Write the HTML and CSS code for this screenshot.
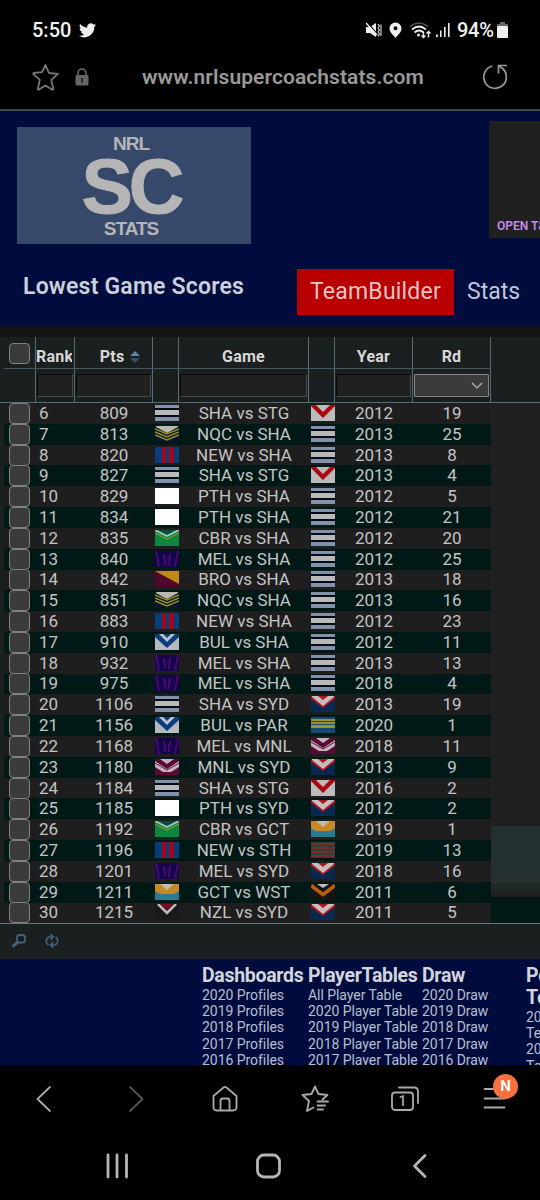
FILE: index.html
```html
<!DOCTYPE html>
<html lang="en">
<head>
    <meta charset="UTF-8">
    <meta name="viewport" content="width=device-width, initial-scale=1.0">
    <title>Lowest Game Scores</title>
    <link rel="stylesheet" href="styles.css">
</head>
<body>
    <div class="status-bar">
        <span class="clock">5:50</span>
        <svg class="bird" width="17" height="15" viewBox="0 0 24 20" fill="#eee"><path d="M24 2.4a10 10 0 0 1-2.8.8A5 5 0 0 0 23.300.4a10 10 0 0 1-3.100 1.200A4.900 4.900 0 0 0 11.700 6 14 14 0 0 1 1.700.9a4.900 4.900 0 0 0 1.500 6.600A5 5 0 0 1 1 6.900a4.900 4.900 0 0 0 3.900 4.900 5 5 0 0 1-2.200.1 4.900 4.900 0 0 0 4.600 3.400A10 10 0 0 1 0 17.400 14 14 0 0 0 21.500 5a10 10 0 0 0 2.500-2.600z"/></svg>
        <div class="status-icons">
            <svg width="16" height="16" viewBox="0 0 16 16" fill="none"><path d="M0 5h4l6-4v14l-6-4H0z" fill="#eee"/><path d="M1 0l10 12" stroke="#000" stroke-width="1.500"/><path d="M0 1l11 12" stroke="#eee" stroke-width="1.500"/><path d="M12 2l1.500 2L12 6l1.500 2L12 10l1.500 2-1.500 2.500M15 2.500V14" stroke="#ddd" stroke-width="1.100"/></svg>
            <svg width="13" height="16" viewBox="0 0 13 16"><path fill="#eee" fill-rule="evenodd" d="M6.500.5a6 6 0 0 1 6 6c0 3.500-3.500 6.500-6 9.500-2.500-3-6-6-6-9.500a6 6 0 0 1 6-6zm0 3.700a2 2 0 1 0 0 4 2 2 0 0 0 0-4z"/></svg>
            <svg width="22" height="17" viewBox="0 0 22 17" fill="none" stroke="#eee" stroke-width="1.700"><path stroke="#555" d="M1 4.500q9-7 18 0"/><path d="M3 7.500q7-6 14 0M5.500 10.500q4.500-4 9 0"/><circle cx="9.500" cy="13" r="1.500" fill="#eee" stroke="none"/><path stroke-width="1.400" d="M14.500 9.500v6m-2-2l2 2 2-2M19.500 15.500v-6m-2 2l2-2 2 2"/></svg>
            <svg width="14" height="16" viewBox="0 0 14 16" fill="#eee"><path d="M0 12.500h1.800V15H0zM4 8.500h1.500V15H4zM8 5h1.600v10H8zM12 1h1.600v14H12z"/></svg>
            <span class="percent">94%</span>
            <svg width="11" height="16" viewBox="0 0 11 16"><path fill="#666" d="M3 0h5v2h3v2H0V2h3z"/><rect y="4" width="11" height="12" rx="1" fill="#eee"/></svg>
        </div>
    </div>

    <div class="url-bar">
        <svg class="fav" width="28" height="28" viewBox="0 0 28 28" fill="none" stroke="#777" stroke-width="1.800" stroke-linejoin="round"><path d="M14.500 2l3.500 8 9 .9-6.700 6 2 9.100q-.2 1-1.300.6L14.500 22.500 8 26.600q-1 .3-1.200-.6l2-9.100-6.600-6q0-.8.8-.9l8-.9z"/></svg>
        <svg class="lock" width="14" height="18" viewBox="0 0 14 18"><path fill="none" stroke="#666" stroke-width="1.600" d="M3 8V5a4 4 0 0 1 8 0v3"/><rect x=".5" y="7" width="13" height="10.500" rx="1.500" fill="#666"/><path stroke="#111" stroke-width="1.500" d="M7 10v4.500"/></svg>
        <span class="address">www.nrlsupercoachstats.com</span>
        <svg class="reload" width="26" height="26" viewBox="0 0 26 26" fill="none" stroke="#999" stroke-width="1.700"><path d="M10.500 2A11.300 11.300 0 1 0 20.500 4.500M25 1.500h-8.500V9.500M17 2l4.500 3"/></svg>
    </div>

    <header class="site-header">
        <div class="banner">
            <div class="logo">
                <span class="logo-small">NRL</span>
                <span class="logo-big">SC</span>
                <span class="logo-small">STATS</span>
            </div>
            <div class="ad">OPEN T&amp;C</div>
        </div>
        <div class="menu">
            <h1>Lowest Game Scores</h1>
            <a class="team-builder">TeamBuilder</a>
            <a class="stats">Stats</a>
        </div>
    </header>

    <main class="grid-box">
        <div class="grid-row grid-head">
            <div class="cell check"><i></i></div>
            <div class="cell rank"><span>Rank</span></div>
            <div class="cell sorted">Pts <svg width="12" height="14" viewBox="0 0 12 14"><path d="M6 1l5 5H1z" fill="#5b88a8"/><path d="M6 13L1 8h10z" fill="#34505f"/></svg></div>
            <div class="cell"></div>
            <div class="cell">Game</div>
            <div class="cell"></div>
            <div class="cell">Year</div>
            <div class="cell">Rd</div>
        </div>
        <div class="grid-row grid-filter">
            <div class="cell"></div>
            <div class="cell"><span class="field"></span></div>
            <div class="cell"><span class="field"></span></div>
            <div class="cell"></div>
            <div class="cell"><span class="field"></span></div>
            <div class="cell"></div>
            <div class="cell"><span class="field"></span></div>
            <div class="cell"><span class="field select"><svg width="12" height="8" viewBox="0 0 12 8" fill="none" stroke="#bbb" stroke-width="1.200"><path d="M1 1l5 5 5-5"/></svg></span></div>
        </div>
        <div class="grid-body">
            <div id="rows"></div>
            <div class="side">
                <div class="side-panel"></div>
                <div class="side-row"></div>
            </div>
        </div>
        <div class="pager">
            <svg width="14" height="14" viewBox="0 0 14 14" fill="none" stroke="#42637d"><rect x="5" y="1" width="8" height="7.500" rx="2.500" stroke-width="1.800"/><path d="M6 8l-5.500 4.500" stroke-width="3"/></svg>
            <svg width="14" height="16" viewBox="0 0 14 16" fill="none" stroke="#42637d" stroke-width="1.600"><path d="M3.500 12A4.500 4.500 0 0 1 4 4h4M5.500 1l3 3-3 3M10.500 4a4.500 4.500 0 0 1-.5 8H6M8.500 9l-3 3 3 3"/></svg>
        </div>
    </main>

    <footer class="site-footer">
        <div class="links dashboards">
            <h2>Dashboards</h2>
            <a>2020 Profiles</a><a>2019 Profiles</a><a>2018 Profiles</a><a>2017 Profiles</a><a>2016 Profiles</a>
        </div>
        <div class="links tables">
            <h2>PlayerTables</h2>
            <a>All Player Table</a><a>2020 Player Table</a><a>2019 Player Table</a><a>2018 Player Table</a><a>2017 Player Table</a>
        </div>
        <div class="links draw">
            <h2>Draw</h2>
            <a>2020 Draw</a><a>2019 Draw</a><a>2018 Draw</a><a>2017 Draw</a><a>2016 Draw</a>
        </div>
        <div class="links teams">
            <h2>Po<br>Te</h2>
            <a>20</a><a>Te</a><a>20</a><a>Te</a>
        </div>
    </footer>

    <nav class="browser-nav">
        <svg width="30" height="30" viewBox="0 0 30 30"><path d="M20 3L7.500 15 20 27"/></svg>
        <svg class="dim" width="30" height="30" viewBox="0 0 30 30"><path d="M10 3l12.500 12L10 27"/></svg>
        <svg width="30" height="30" viewBox="0 0 30 30"><path d="M3.500 12L13.500 3.500q1.500-1 3 0L26.500 12v11q0 3.500-3.500 3.500H7q-3.500 0-3.500-3.500zM10.500 26V17q0-2.500 2.500-2.500h4q2.500 0 2.500 2.500v9"/></svg>
        <svg width="30" height="30" viewBox="0 0 30 30"><path d="M22.500 15.500l5-4.500-9-1L15 2.500 11.500 10l-9 1 6.500 6-2 10 6.500-3.500M17.500 17.500H28M17.500 21.500h7.500M17.500 25.500H23"/></svg>
        <svg width="30" height="30" viewBox="0 0 30 30"><rect x="2" y="8.500" width="21" height="17.500" rx="3"/><path d="M9 3.500h15q4 0 4 4V19"/><text x="12.500" y="22" text-anchor="middle">1</text></svg>
        <div class="menu-icon">
            <svg width="30" height="30" viewBox="0 0 30 30"><path d="M4.500 5h20M4.500 14.500h20M4.500 23.500h20"/></svg>
            <b>N</b>
        </div>
    </nav>

    <div class="system-nav">
        <svg width="28" height="28" viewBox="0 0 28 28"><path d="M5 3v22M14 3v22M23.500 3v22"/></svg>
        <svg width="28" height="28" viewBox="0 0 28 28"><rect x="2.500" y="3" width="22" height="22" rx="6.500"/></svg>
        <svg width="28" height="28" viewBox="0 0 28 28"><path d="M19 3.500L8.500 14 19 24.500"/></svg>
    </div>

    <script src="script.js"></script>
</body>
</html>
```
FILE: styles.css
```css
* {
    box-sizing: border-box;
}
body {
    margin: 0;
    width: 540px;
    height: 1200px;
    overflow: hidden;
    background: #000;
    color: #c8c8c8;
    font-family: Roboto, "Liberation Sans", sans-serif;
}
svg {
    flex: none;
}
h1, h2 {
    margin: 0;
}

/* phone status bar and address bar */
.status-bar {
    display: flex;
    align-items: center;
    height: 60px;
    padding: 0 32px 0 32px;
    color: #f2f2f2;
    font-weight: 500;
}
.clock {
    font-size: 20px;
    width: 40px;
}
.bird {
    margin-left: 7px;
}
.status-icons {
    display: flex;
    align-items: center;
    margin-left: auto;
}
.status-icons svg:nth-child(2) {
    margin: 0 7px 0 7px;
}
.status-icons svg:nth-child(4) {
    margin-left: 5px;
}
.percent {
    font-size: 20px;
    width: 38px;
    margin: 0 2px 0 7px;
    letter-spacing: -0.3px;
}
.url-bar {
    display: flex;
    align-items: center;
    height: 51px;
    padding: 0 32px 16px 31px;
    border-bottom: 2px solid #3f4a4a;
}
.lock {
    margin-left: 16px;
}
.address {
    margin-left: 53px;
    padding-top: 1px;
    color: #999;
    font-size: 21px;
    font-weight: 600;
    letter-spacing: 0.08px;
    white-space: nowrap;
}
.reload {
    margin-left: auto;
}

.site-header {
    height: 215px;
    background: #000c3d;
}
.banner {
    display: flex;
    justify-content: space-between;
    height: 134px;
    padding: 10px 0 0 17px;
}
.logo {
    display: flex;
    flex-direction: column;
    align-items: center;
    width: 234px;
    height: 117px;
    margin-top: 6px;
    padding: 6px 6px 0 0;
    background: #36496b;
    color: #b5b5b5;
    font-family: "Liberation Sans", sans-serif;
    font-weight: bold;
}
.logo-small {
    font-size: 19px;
    line-height: 22px;
    letter-spacing: -1px;
}
.logo-big {
    font-size: 77px;
    line-height: 63px;
    letter-spacing: -4px;
    -webkit-text-stroke: 1px #b5b5b5;
}
.ad {
    display: flex;
    align-items: flex-end;
    width: 51px;
    height: 117px;
    padding: 0 0 5px 8px;
    overflow: hidden;
    background: #202020;
    color: #c58de8;
    font-size: 12px;
    font-weight: 600;
    white-space: nowrap;
}
.menu {
    display: flex;
    align-items: flex-start;
    padding: 24px 0 0 23px;
}
h1 {
    width: 274px;
    padding-top: 4px;
    color: #ccd0da;
    font-size: 23px;
    font-weight: 600;
    line-height: 27px;
    letter-spacing: 0.2px;
}
.menu a {
    font-size: 23px;
    line-height: 46px;
}
.menu .team-builder {
    width: 157px;
    background: #b90000;
    color: #e4c4c4;
    letter-spacing: 0.2px;
    text-align: center;
}
.stats {
    margin-left: 13px;
    color: #bfc8dc;
}

/* scores grid */
.grid-box {
    height: 633px;
    padding-top: 10px;
    border-top: 1px solid #121212;
    background: linear-gradient(#151515 10px, #1a1f1f 10px);
}
.grid-row {
    display: grid;
    grid-template-columns: 32px 39px 78px 26px 130px 26px 78px 78px;
    width: 487px;
    margin-left: 4px;
}
.cell {
    display: flex;
    align-items: center;
    justify-content: center;
    overflow: hidden;
}
.grid-head {
    height: 32px;
    border-bottom: 1px solid #47565c;
    color: #d8d8d8;
    font-size: 16px;
    font-weight: 700;
    letter-spacing: 0.2px;
}
.grid-head .cell,
.grid-filter .cell {
    border-right: 1px solid #5b6b73;
}
.grid-head .cell {
    padding-top: 8px;
}
.grid-head .check {
    padding-top: 2px;
}
.grid-head .rank {
    justify-content: flex-start;
}
.grid-head .rank span {
    width: 36px;
    overflow: hidden;
}
.grid-head .sorted {
    padding-left: 14px;
}
.grid-head svg {
    margin-left: 5px;
}
.grid-filter {
    height: 33px;
}
.field {
    flex: 1;
    height: 23px;
    margin: 0 1px;
    border: 1px solid #414c50;
    border-top-color: #080808;
    border-left-color: #080808;
    background: #202020;
}
.select {
    display: flex;
    align-items: center;
    justify-content: flex-end;
    padding-right: 5px;
    border: 1px solid #858585;
    border-radius: 1px;
    background: #3b3b3b;
}
.check i {
    flex: none;
    width: 21px;
    height: 21px;
    margin-right: 1px;
    border: 1.5px solid #808080;
    border-radius: 4px;
    background: #3b3b3b;
}
.grid-body {
    display: flex;
    height: 522px;
    border-top: 1px solid #5b6b73;
    border-bottom: 1px solid #68777e;
}
#rows .grid-row {
    height: 20.82px;
    background: #1e1e1e;
    color: #c4c4c4;
    font-size: 17px;
    line-height: 20px;
}
#rows .grid-row:nth-child(even) {
    background: #001917;
}
#rows .cell {
    padding-bottom: 1px;
}
#rows .check {
    padding-bottom: 0;
}
#rows .rank {
    justify-content: flex-start;
    padding-left: 3px;
}
#rows .team {
    justify-content: flex-end;
}
.side {
    display: flex;
    flex: 1;
    flex-direction: column;
    justify-content: flex-end;
    background: #202020;
}
.side-panel {
    height: 66px;
    background: linear-gradient(#253030 57px, #1e2727 57px);
}
.side-row {
    height: 26px;
    margin-top: 5px;
    background: #001917;
}
.pager {
    display: flex;
    align-items: center;
    gap: 19px;
    height: 34px;
    padding-left: 12px;
}

.site-footer {
    display: flex;
    height: 106px;
    padding: 6px 0 0 202px;
    overflow: hidden;
    background: #000c3d;
    color: #b9bfd0;
}
.links {
    flex: none;
    white-space: nowrap;
}
.links h2 {
    color: #d2d5dd;
    font-size: 19.5px;
    font-weight: 700;
    line-height: 22px;
    letter-spacing: -0.3px;
}
.links a {
    display: block;
    font-size: 14px;
    line-height: 16.2px;
    letter-spacing: -0.05px;
}
.dashboards {
    width: 106px;
}
.tables {
    width: 114px;
}
.draw {
    width: 104px;
}

.browser-nav {
    display: flex;
    justify-content: space-between;
    height: 69px;
    padding: 19px 30px 0;
    fill: none;
    stroke: #aaa;
    stroke-width: 1.8;
    stroke-linecap: round;
    stroke-linejoin: round;
}
.browser-nav .dim {
    stroke: #555;
}
.browser-nav text {
    fill: #aaa;
    stroke: none;
    font-size: 14px;
    font-weight: 500;
}
.menu-icon {
    position: relative;
}
.menu-icon b {
    position: absolute;
    top: -10px;
    left: 13px;
    width: 25px;
    height: 25px;
    border-radius: 50%;
    background: #f9703e;
    color: #fff;
    font-size: 15px;
    font-weight: 600;
    line-height: 25px;
    text-align: center;
}
.system-nav {
    display: flex;
    justify-content: space-between;
    padding: 18px 106px 0 103px;
    fill: none;
    stroke: #b5b5b5;
    stroke-width: 2.8;
    stroke-linecap: round;
    stroke-linejoin: round;
}
```
FILE: script.js
```javascript
// team colours, drawn in a 24x16 box
const flags = {
    SHA: '<path fill="#050b14" d="M0 0h24v16H0z"/><path fill="#8292ab" d="M0 0h24v3H0zM0 12h24v4H0z"/><path fill="#b9b9b9" d="M0 5h24v5H0z"/>',
    STG: '<path fill="#bbb" d="M0 0h24v16H0z"/><path fill="#aa0710" d="M0 0h5l7 7 7-7h5v1L12 13 0 1z"/>',
    NQC: '<path fill="#07162d" d="M0 0h24v16H0z"/><path fill="#b9b9b0" d="M1 0h22v1l-11 6L1 1z"/><path fill="none" stroke="#948f22" stroke-width="1.6" d="M0 3l12 5 12-5M0 6l12 5 12-5M0 9l12 5 12-5"/>',
    NEW: '<path fill="#073d78" d="M0 0h24v16H0z"/><path fill="#a1081d" d="M7 0h4v16H7zM14 0h5v16h-5z"/>',
    PTH: '<path fill="#fff" d="M0 0h24v16H0z"/>',
    CBR: '<path fill="#0c8740" d="M0 0h24v16H0z"/><path fill="#0b4b37" d="M3 0h18l-9 5z"/><path fill="none" stroke="#9cc7d1" stroke-width="1.600" d="M0 0l12 6 12-6"/><path fill="none" stroke="#8f8e24" stroke-width="1.200" d="M0 3l12 6 12-6"/>',
    MEL: '<path fill="#15064c" d="M0 0h24v16H0z"/><path fill="none" stroke="#45086c" stroke-width="2" d="M1 0l3 16M23 0l-3 16M9 3v4l1 0v7M15 3v4l-1 0v7"/>',
    BRO: '<path fill="#4f0829" d="M0 0h24v16H0z"/><path fill="#bf8818" d="M0 0h24v13z"/>',
    BUL: '<path fill="#b6b9bd" d="M0 0h24v16H0z"/><path fill="#093d7c" d="M0 0h24v3L12 14 0 3z"/><path fill="#bcc3ce" d="M4 0h4l4 4 4-4h4l-8 8z"/>',
    SYD: '<path fill="#07294f" d="M0 0h24v16H0z"/><path fill="#ad1520" d="M0 0h24v3L12 12 0 3z"/><path fill="#c6bdbc" d="M1 0h6l5 4 5-4h6v1L12 10 1 1z"/>',
    PAR: '<path fill="#164877" d="M0 0h24v16H0z"/><path fill="#9b9427" d="M0 2h24v2H0zM0 5h24v2H0zM0 8h24v3H0z"/>',
    MNL: '<path fill="#5a0935" d="M0 0h24v16H0z"/><path fill="#c2b4bd" d="M0 2l12 8 12-8v6l-8 5H8L0 8zM5 0h14l-7 5z"/><path fill="none" stroke="#651341" d="M0 4l12 7 12-7"/>',
    GCT: '<path fill="#2b7b93" d="M0 0h24v16H0z"/><path fill="#c88922" d="M0 0h24v7l-5 3H5L0 7z"/><path fill="#c1bbb1" d="M5 0h14l-7 6z"/>',
    STH: '<path fill="#284434" d="M0 0h24v16H0z"/><path fill="#792b2b" d="M0 1h24v2H0zM0 5h24v2H0zM0 9h24v2H0zM0 13h24v2H0z"/>',
    WST: '<path fill="#171513" d="M0 0h24v16H0z"/><path fill="#bcc0c4" d="M6 0h12l-6 4z"/><path fill="none" stroke="#b95e0b" stroke-width="3.500" d="M0 1.500l12 9 12-9"/>',
    NZL: '<path fill="#19191b" d="M0 0h24v16H0z"/><path fill="#790c27" d="M5 0h14l-7 6z"/><path fill="none" stroke="#bbb" stroke-width="2.500" d="M3 0l9 9 9-9"/>'
};

const scores = [
    [6, 809, 'SHA', 'STG', 2012, 19],
    [7, 813, 'NQC', 'SHA', 2013, 25],
    [8, 820, 'NEW', 'SHA', 2013, 8],
    [9, 827, 'SHA', 'STG', 2013, 4],
    [10, 829, 'PTH', 'SHA', 2012, 5],
    [11, 834, 'PTH', 'SHA', 2012, 21],
    [12, 835, 'CBR', 'SHA', 2012, 20],
    [13, 840, 'MEL', 'SHA', 2012, 25],
    [14, 842, 'BRO', 'SHA', 2013, 18],
    [15, 851, 'NQC', 'SHA', 2013, 16],
    [16, 883, 'NEW', 'SHA', 2012, 23],
    [17, 910, 'BUL', 'SHA', 2012, 11],
    [18, 932, 'MEL', 'SHA', 2013, 13],
    [19, 975, 'MEL', 'SHA', 2018, 4],
    [20, 1106, 'SHA', 'SYD', 2013, 19],
    [21, 1156, 'BUL', 'PAR', 2020, 1],
    [22, 1168, 'MEL', 'MNL', 2018, 11],
    [23, 1180, 'MNL', 'SYD', 2013, 9],
    [24, 1184, 'SHA', 'STG', 2016, 2],
    [25, 1185, 'PTH', 'SYD', 2012, 2],
    [26, 1192, 'CBR', 'GCT', 2019, 1],
    [27, 1196, 'NEW', 'STH', 2019, 13],
    [28, 1201, 'MEL', 'SYD', 2018, 16],
    [29, 1211, 'GCT', 'WST', 2011, 6],
    [30, 1215, 'NZL', 'SYD', 2011, 5]
];

function flag(team) {
    return `<svg width="24" height="16" viewBox="0 0 24 16">${flags[team]}</svg>`;
}

document.getElementById('rows').innerHTML = scores.map(([rank, pts, home, away, year, round]) => `
    <div class="grid-row">
        <div class="cell check"><i></i></div>
        <div class="cell rank">${rank}</div>
        <div class="cell">${pts}</div>
        <div class="cell team">${flag(home)}</div>
        <div class="cell">${home} vs ${away}</div>
        <div class="cell team">${flag(away)}</div>
        <div class="cell">${year}</div>
        <div class="cell">${round}</div>
    </div>`).join('');
```
